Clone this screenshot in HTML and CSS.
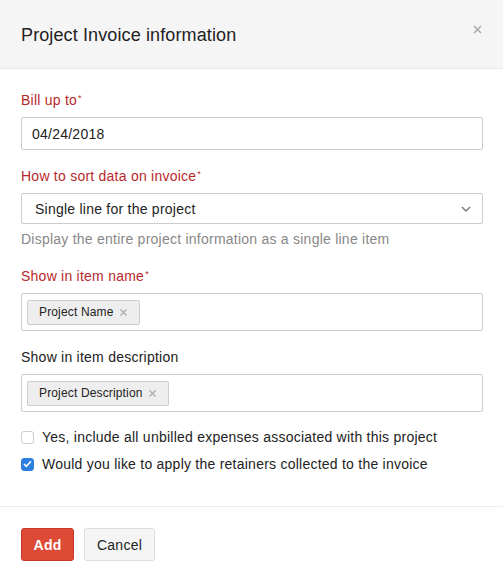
FILE: index.html
```html
<!DOCTYPE html>
<html>
<head>
<meta charset="utf-8">
<link rel="stylesheet" href="styles.css">
</head>
<body>
<div class="modal">
  <div class="header">
    <h2 class="title">Project Invoice information</h2>
    <svg class="close" width="9" height="9" viewBox="0 0 9 9"><path d="M1 1l7 7M8 1l-7 7" stroke="#aaa" stroke-width="1.5"/></svg>
  </div>
  <div class="body">
    <div class="field f1">
      <label class="label req">Bill up to<sup>*</sup></label>
      <div class="input">04/24/2018</div>
    </div>
    <div class="field f2">
      <label class="label req">How to sort data on invoice<sup>*</sup></label>
      <div class="input select">
        <span>Single line for the project</span>
        <svg class="chev" width="10" height="6" viewBox="0 0 10 6"><path d="M1 1l4 4 4-4" fill="none" stroke="#777" stroke-width="1.4"/></svg>
      </div>
      <div class="help">Display the entire project information as a single line item</div>
    </div>
    <div class="field f3">
      <label class="label req">Show in item name<sup>*</sup></label>
      <div class="tagbox"><span class="tag">Project Name <svg class="x" width="7" height="7" viewBox="0 0 7 7"><path d="M0.5 0.5l6 6M6.5 0.5l-6 6" stroke="#aaa" stroke-width="1.2"/></svg></span></div>
    </div>
    <div class="field f4">
      <label class="label">Show in item description</label>
      <div class="tagbox"><span class="tag">Project Description <svg class="x" width="7" height="7" viewBox="0 0 7 7"><path d="M0.5 0.5l6 6M6.5 0.5l-6 6" stroke="#aaa" stroke-width="1.2"/></svg></span></div>
    </div>
    <div class="checks">
      <label class="check"><span class="box"></span>Yes, include all unbilled expenses associated with this project</label>
      <label class="check"><span class="box on"><svg width="9" height="8" viewBox="0 0 9 8"><path d="M1 4l2.3 2.3L8 1.2" fill="none" stroke="#fff" stroke-width="1.6"/></svg></span>Would you like to apply the retainers collected to the invoice</label>
    </div>
  </div>
  <div class="footer">
    <button class="btn primary">Add</button>
    <button class="btn secondary">Cancel</button>
  </div>
</div>
</body>
</html>
```
FILE: styles.css
```css
html, body { margin: 0; padding: 0; background: #fff; }
body { font-family: "Liberation Sans", Arial, sans-serif; color: #222; font-size: 14px; letter-spacing: 0.24px; }
.modal { width: 503px; }
.header { background: #f5f5f5; border-bottom: 1px solid #e8e8e8; height: 69px; display: flex; align-items: center; padding: 0 20px 0 21px; box-sizing: border-box; position: relative; }
.title { margin: 0; font-weight: normal; font-size: 18px; color: #222; letter-spacing: 0.12px; padding-top: 2px; }
.close { position: absolute; right: 21px; top: 25px; }
.body { padding: 23px 20px 34px 21px; }
.field { margin-bottom: 18px; }
.f2 { margin-bottom: 21px; }
.label { display: block; font-size: 14px; margin-bottom: 9px; color: #222; line-height: 16px; }
.label.req { color: #b8292c; }
.label sup { font-size: 9px; vertical-align: top; line-height: 10px; position: relative; top: 1px; margin-left: 1px; }
.input { height: 33px; box-sizing: border-box; border: 1px solid #ccc; border-radius: 2px; padding: 0 10px; display: flex; align-items: center; font-size: 14px; color: #222; }
.select { justify-content: space-between; height: 31px; padding: 0 11px 0 13px; }
.help { color: #888; font-size: 14px; margin-top: 7px; line-height: 16px; }
.tagbox { height: 38px; box-sizing: border-box; border: 1px solid #ccc; border-radius: 2px; padding: 0 5px; display: flex; align-items: center; }
.tag { background: #eee; border: 1px solid #ccc; border-radius: 2px; padding: 0 12px 0 11px; height: 25px; box-sizing: border-box; display: inline-flex; align-items: center; font-size: 12px; letter-spacing: 0.15px; color: #222; }
.tag .x { margin-left: 6px; }
.checks { display: flex; flex-direction: column; gap: 11px; margin-top: -1px; }
.check { display: flex; align-items: center; font-size: 14px; color: #222; line-height: 16px; }
.box { width: 13px; height: 13px; box-sizing: border-box; border: 1px solid #ccc; border-radius: 3px; margin-right: 8px; display: inline-flex; align-items: center; justify-content: center; background: #fff; }
.box.on { background: #2f7fe0; border-color: #2f7fe0; }
.footer { border-top: 1px solid #eee; padding: 21px 21px; display: flex; gap: 10px; }
.btn { font-family: inherit; font-size: 14px; height: 33px; padding: 0; border: 1px solid #ddd; background: #f5f5f5; border-radius: 3px; color: #222; letter-spacing: 0.24px; }
.btn.primary { background: #dd4a35; border-color: #c9372a; color: #fff; font-weight: bold; width: 53px; }
.btn.secondary { width: 71px; }
```
